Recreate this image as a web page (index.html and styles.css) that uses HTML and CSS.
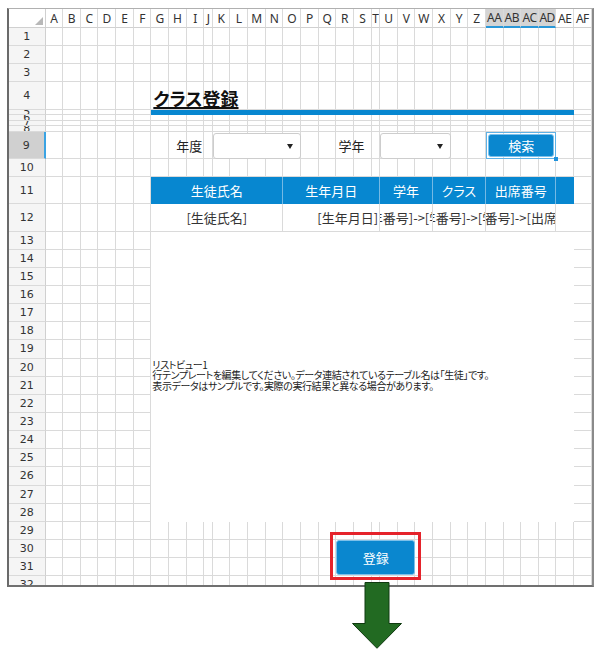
FILE: index.html
```html
<!DOCTYPE html>
<html>
  <head>
    <meta charset='utf-8'>
    <title>クラス登録</title>
    <link rel="stylesheet" href="styles.css">
    <script>
    // Header cells that are highlighted by the current selection
    const selected_cols = ['AA', 'AB', 'AC', 'AD'];
    const selected_row = 9;
    const col_count = 32;
    const row_count = 32;

    function col_name(i) {
      const letters = 'ABCDEFGHIJKLMNOPQRSTUVWXYZ';
      if (i < 26) {
        return letters[i];
      }
      return 'A' + letters[i - 26];
    }

    document.addEventListener("DOMContentLoaded", () => {
      const cells = document.getElementById('cells');

      function add(className, text) {
        const div = document.createElement('div');
        div.className = className;
        if (text !== undefined) {
          div.textContent = text;
        }
        cells.appendChild(div);
      }

      add('corner');
      for (let c = 0; c < col_count; c++) {
        const name = col_name(c);
        add(selected_cols.includes(name) ? 'colhead sel' : 'colhead', name);
      }

      for (let r = 1; r <= row_count; r++) {
        add(r === selected_row ? 'rowhead sel' : 'rowhead', r);
        for (let c = 0; c < col_count; c++) {
          add('cell');
        }
      }
    });
    </script>
  </head>

  <body>
    <div class="sheet">
      <div class="cells" id="cells"></div>

      <div class="layer">
        <div class="title">クラス登録</div>
        <div class="bar"></div>

        <div class="label label-year">年度</div>
        <div class="select select-year"><span class="caret"></span></div>
        <div class="label label-grade">学年</div>
        <div class="select select-grade"><span class="caret"></span></div>
        <div class="search">
          <div class="btn">検索</div>
          <span class="handle"></span>
        </div>

        <div class="th th-name">生徒氏名</div>
        <div class="th th-birth">生年月日</div>
        <div class="th th-grade">学年</div>
        <div class="th th-class">クラス</div>
        <div class="th th-no">出席番号</div>
        <div class="th th-rest"></div>

        <div class="td th-name">[生徒氏名]</div>
        <div class="td td-right th-birth">[生年月日]</div>
        <div class="td th-grade"><span>[学年番号]-&gt;[学年]</span></div>
        <div class="td th-class"><span>[学年番号]-&gt;[学年]</span></div>
        <div class="td th-no"><span>[出席番号]-&gt;[出席番号]</span></div>
        <div class="td th-rest"></div>

        <div class="list">
          <div>リストビュー1</div>
          <div>行テンプレートを編集してください。データ連結されているテーブル名は「生徒」です。</div>
          <div>表示データはサンプルです。実際の実行結果と異なる場合があります。</div>
        </div>

        <div class="register">
          <div class="btn">登録</div>
        </div>
      </div>
    </div>

    <div class="arrow">
      <svg width="52" height="67" viewBox="0 0 52 67">
        <polygon points="14,0.5 38,0.5 38,41.5 50.5,41.5 26,66.3 1.5,41.5 14,41.5" fill="#226a22" stroke="#0f3a10" stroke-width="1"/>
      </svg>
    </div>
  </body>
</html>
```

FILE: styles.css
```css
body {
  margin: 0;
  background: #fff;
  color: #333;
  font-family: "Noto Sans CJK JP", sans-serif;
  font-feature-settings: "palt";
}

.sheet {
  --cols: 36.5px repeat(9, 17.65px) 8.5px repeat(9, 17.65px) 8.5px repeat(12, 17.65px);
  --rows: 19px 18px 18px 18px 27.5px repeat(4, 5.6px) 27.3px 18px 27px 27.4px repeat(20, 18.15px);
  display: grid;
  width: 583px;
  height: 576px;
  margin: 8px 0 0 7px;
  border-style: solid;
  border-width: 1px 2px 2px 2px;
  border-color: #b0b0b0 #8a8a8a #707070 #6a6a6a;
  overflow: hidden;
}

.cells, .layer {
  grid-area: 1 / 1;
  display: grid;
  grid-template-columns: var(--cols);
  grid-template-rows: var(--rows);
}

/* grid background */
.cell {
  border-right: 1px solid #dadada;
  border-bottom: 1px solid #dadada;
}

.corner {
  display: flex;
  align-items: flex-end;
  justify-content: flex-end;
  border-right: 1px solid #d0d0d0;
  border-bottom: 1px solid #d0d0d0;
}

.corner::after {
  content: '';
  margin: 0 2px 2px 0;
  border-style: solid;
  border-width: 0 0 8px 8px;
  border-color: transparent transparent #b8b8b8 transparent;
}

.colhead, .rowhead {
  display: flex;
  align-items: center;
  justify-content: center;
  overflow: hidden;
  white-space: nowrap;
  color: #333;
}

.colhead {
  font-family: "Noto Sans", sans-serif;
  font-size: 12px;
  letter-spacing: -0.5px;
  border-right: 1px solid #dadada;
  border-bottom: 1px solid #d0d0d0;
}

.colhead.sel {
  background: #d4d4d4;
  border-bottom: 2px solid #2b98d8;
}

.rowhead {
  font-family: "DejaVu Sans", sans-serif;
  font-size: 11px;
  background: #f5f5f5;
  border-right: 1px solid #d0d0d0;
  border-bottom: 1px solid #dadada;
}

.rowhead.sel {
  background: #d0d0d0;
  border-right: 2px solid #3aa3e3;
}

/* page content */
.title {
  grid-row: 5;
  grid-column: 8 / 20;
  align-self: end;
  padding: 0 0 3px 2px;
  font-size: 18px;
  font-weight: bold;
  line-height: 1;
  color: #111;
  text-decoration: underline;
  text-decoration-thickness: 1.5px;
}

.bar {
  grid-row: 6;
  grid-column: 8 / 33;
  background: #0787d0;
}

.label {
  grid-row: 10;
  align-self: center;
  justify-self: end;
  font-size: 13px;
  color: #222;
}

.label-year {
  grid-column: 8 / 11;
  margin-right: 2px;
}

.label-grade {
  grid-column: 18 / 21;
  margin-right: 7px;
}

.select {
  grid-row: 10;
  display: flex;
  align-items: center;
  justify-content: flex-end;
  margin-top: 1.5px;
  padding-right: 7px;
  background: #fff;
  border: 1px solid #cdcdcd;
  border-radius: 3px;
}

.select-year {
  grid-column: 12 / 17;
}

.select-grade {
  grid-column: 22 / 26;
}

.caret {
  border-style: solid;
  border-width: 5px 3.5px 0 3.5px;
  border-color: #222 transparent transparent transparent;
}

.search {
  grid-row: 10;
  grid-column: 28 / 32;
  display: flex;
  position: relative;
  padding: 1px;
  border: 1px solid #5fb2e6;
}

.search .btn,
.register .btn {
  flex: 1;
}

.handle {
  position: absolute;
  right: -3px;
  bottom: -3px;
  width: 4px;
  height: 4px;
  background: #1f92dc;
}

.btn {
  display: flex;
  align-items: center;
  justify-content: center;
  background: #0a87cf;
  border: 1px solid #7cc0ea;
  border-radius: 3px;
  box-shadow: inset 0 0 0 1px #0a87cf;
  color: #fff;
  font-size: 13px;
}

.th, .td {
  display: flex;
  align-items: center;
  justify-content: center;
  overflow: hidden;
  white-space: nowrap;
  font-size: 13px;
}

.th {
  grid-row: 12;
  background: #0787d0;
  color: #fff;
  border-right: 1px solid #74b9e4;
}

.td {
  grid-row: 13;
  background: #fff;
  color: #333;
  border-right: 1px solid #dadada;
  border-bottom: 1px solid #dadada;
}

.td-right {
  justify-content: flex-end;
  padding-right: 1px;
}

.td span {
  flex: none;
}

.th-name {
  grid-column: 8 / 16;
}

.th-birth {
  grid-column: 16 / 22;
}

.th-grade {
  grid-column: 22 / 25;
}

.th-class {
  grid-column: 25 / 28;
}

.th-no {
  grid-column: 28 / 32;
}

.th-rest {
  grid-column: 32 / 33;
  border-right: none;
}

.list {
  grid-row: 14 / 30;
  grid-column: 8 / 33;
  display: flex;
  flex-direction: column;
  justify-content: center;
  padding: 0 0 2px 1px;
  background: #fff;
  font-size: 10px;
  line-height: 10.5px;
  letter-spacing: -0.4px;
  color: #222;
}

.register {
  grid-row: 31 / 33;
  grid-column: 19 / 24;
  display: flex;
  margin: -7.5px -6px -3.5px -6px;
  padding: 4.5px 3px 2px 3px;
  border: 3px solid #e5232b;
}

.arrow {
  display: flex;
  margin: -5px 0 0 351px;
}
```
